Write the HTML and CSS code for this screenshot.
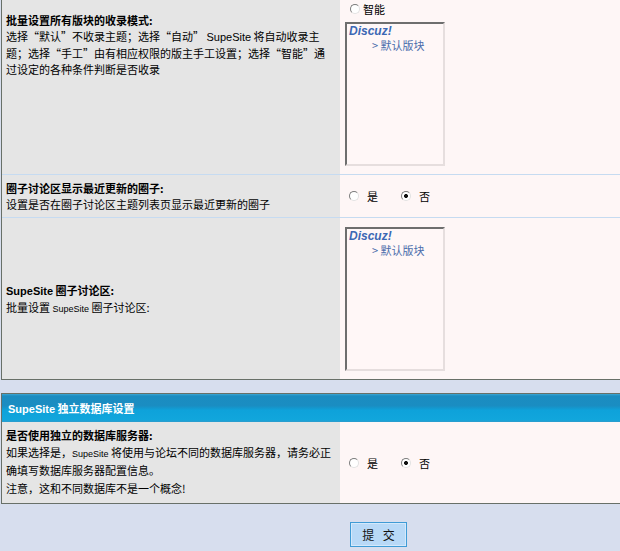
FILE: index.html
```html
<!DOCTYPE html>
<html lang="zh-CN">
<head>
<meta charset="utf-8">
<title>SupeSite 设置</title>
<link rel="stylesheet" href="styles.css">
</head>
<body>
<form class="page" action="#" method="post">
  <table class="settings settings-main">
    <tr>
      <td class="label">
        <strong class="title">批量设置所有版块的收录模式:</strong>
        <p class="desc">选择“默认”不收录主题；选择“自动” <span class="en">SupeSite</span> 将自动收录主题；选择“手工”由有相应权限的版主手工设置；选择“智能”通过设定的各种条件判断是否收录</p>
      </td>
      <td class="value">
        <div class="choices stacked">
          <label><input type="radio" name="collectmode" value="0" checked>默认</label>
          <label><input type="radio" name="collectmode" value="1">自动</label>
          <label><input type="radio" name="collectmode" value="2">手工</label>
          <label><input type="radio" name="collectmode" value="3">智能</label>
        </div>
        <div class="listbox" role="listbox">
          <div class="group">Discuz!</div>
          <div class="option" role="option">&gt; 默认版块</div>
        </div>
      </td>
    </tr>
    <tr>
      <td class="label">
        <strong class="title">圈子讨论区显示最近更新的圈子:</strong>
        <p class="desc">设置是否在圈子讨论区主题列表页显示最近更新的圈子</p>
      </td>
      <td class="value">
        <div class="choices inline">
          <label><input type="radio" name="showgroups" value="1">是</label>
          <label><input type="radio" name="showgroups" value="0" checked>否</label>
        </div>
      </td>
    </tr>
    <tr>
      <td class="label">
        <strong class="title"><span class="en">SupeSite</span> 圈子讨论区:</strong>
        <p class="desc">批量设置 <span class="en sm">SupeSite</span> 圈子讨论区:</p>
      </td>
      <td class="value">
        <div class="listbox" role="listbox">
          <div class="group">Discuz!</div>
          <div class="option" role="option">&gt; 默认版块</div>
        </div>
      </td>
    </tr>
  </table>

  <table class="settings settings-db">
    <tr class="section-head">
      <th colspan="2"><span class="en">SupeSite</span> 独立数据库设置</th>
    </tr>
    <tr>
      <td class="label">
        <strong class="title">是否使用独立的数据库服务器:</strong>
        <p class="desc">如果选择是，<span class="en sm">SupeSite</span> 将使用与论坛不同的数据库服务器，请务必正确填写数据库服务器配置信息。<br>注意，这和不同数据库不是一个概念!</p>
      </td>
      <td class="value">
        <div class="choices inline">
          <label><input type="radio" name="dbmode" value="1">是</label>
          <label><input type="radio" name="dbmode" value="0" checked>否</label>
        </div>
      </td>
    </tr>
  </table>

  <div class="actions">
    <button type="submit" class="btn">提 交</button>
  </div>
</form>
</body>
</html>
```

FILE: styles.css
```css
html, body {
  overflow: hidden;
}

body {
  margin: 0;
  background: #d7deee;
  color: #000;
  font-family: "Noto Sans CJK SC", sans-serif;
  font-size: 11px;
}

.page {
  width: 755px;
  padding-left: 1px;
}

/* settings tables */
.settings {
  width: 755px;
  border: 1px solid #687068;
  border-spacing: 0;
}

.settings-main {
  margin-top: -86px;
}

.settings-db {
  margin-top: 13px;
}

.settings td {
  vertical-align: middle;
  border-bottom: 1px solid #c6dbf1;
}

.settings tr:last-child td {
  border-bottom: 0;
}

.label {
  width: 338px;
  box-sizing: border-box;
  padding: 5px 8px 5px 4px;
  background: #e5e5e5;
}

.value {
  padding: 4px 4px 4px 5px;
  background: #fef6f6;
}

.title {
  display: block;
  font-weight: bold;
  line-height: 16px;
}

.desc {
  margin: 0;
  line-height: 16px;
}

.settings-db .label {
  padding-bottom: 6px;
}

.settings-db .desc {
  line-height: 18px;
}

.en {
  font-family: "Liberation Sans", sans-serif;
  font-size: 11px;
}

.en.sm {
  font-size: 9px;
  line-height: 1;
}

/* section header bar */
.section-head th {
  height: 28px;
  box-sizing: border-box;
  padding: 0 6px;
  text-align: left;
  color: #fff;
  font-weight: bold;
  font-size: 11px;
  background: linear-gradient(to bottom, #3ba6d4 0, #1b8cc0 2px, #1a8dc2 42%, #0ea2da 58%, #11a6dc 92%, #2f9ccc 100%);
}

/* radio choices */
.choices label {
  display: flex;
  align-items: center;
  height: 17px;
}

.choices input {
  appearance: none;
  -webkit-appearance: none;
  box-sizing: border-box;
  width: 10px;
  height: 10px;
  margin: 0;
  border-radius: 50%;
  border: 1px solid;
  border-color: #7c7c7c #e2e2e2 #e2e2e2 #7c7c7c;
  background: #fff;
}

.choices input:checked {
  background: radial-gradient(circle, #111 0 1.6px, #fff 2.3px);
}

.choices.stacked {
  display: flex;
  flex-direction: column;
  gap: 10px;
}

.choices.stacked label {
  gap: 3px;
  padding-left: 5px;
}

.choices.inline {
  display: flex;
  padding-left: 4px;
}

.choices.inline label {
  gap: 8px;
  margin-right: 23px;
}

/* forum list box */
.listbox {
  width: 100px;
  height: 144px;
  box-sizing: border-box;
  margin: 5px 0 4px;
  padding: 0 2px;
  border: 2px solid;
  border-color: #6e6e6e #e6dede #e6dede #6e6e6e;
  background: #fff7f7;
  color: #4a6cab;
  line-height: 14px;
}

.group {
  font: italic bold 12px/14px "Liberation Sans", sans-serif;
  color: #3b67b4;
}

.option {
  padding-left: 23px;
  font-size: 11px;
}

/* submit row */
.actions {
  padding-top: 18px;
  text-align: center;
}

.btn {
  width: 57px;
  height: 25px;
  padding: 0;
  border: 1px solid #3f9bd6;
  background: #b8d9f7;
  box-shadow: inset 0 0 0 1px #d4e9fb;
  color: #111;
  font-family: "Noto Sans CJK SC", sans-serif;
  font-size: 12px;
  word-spacing: 6px;
}
```
